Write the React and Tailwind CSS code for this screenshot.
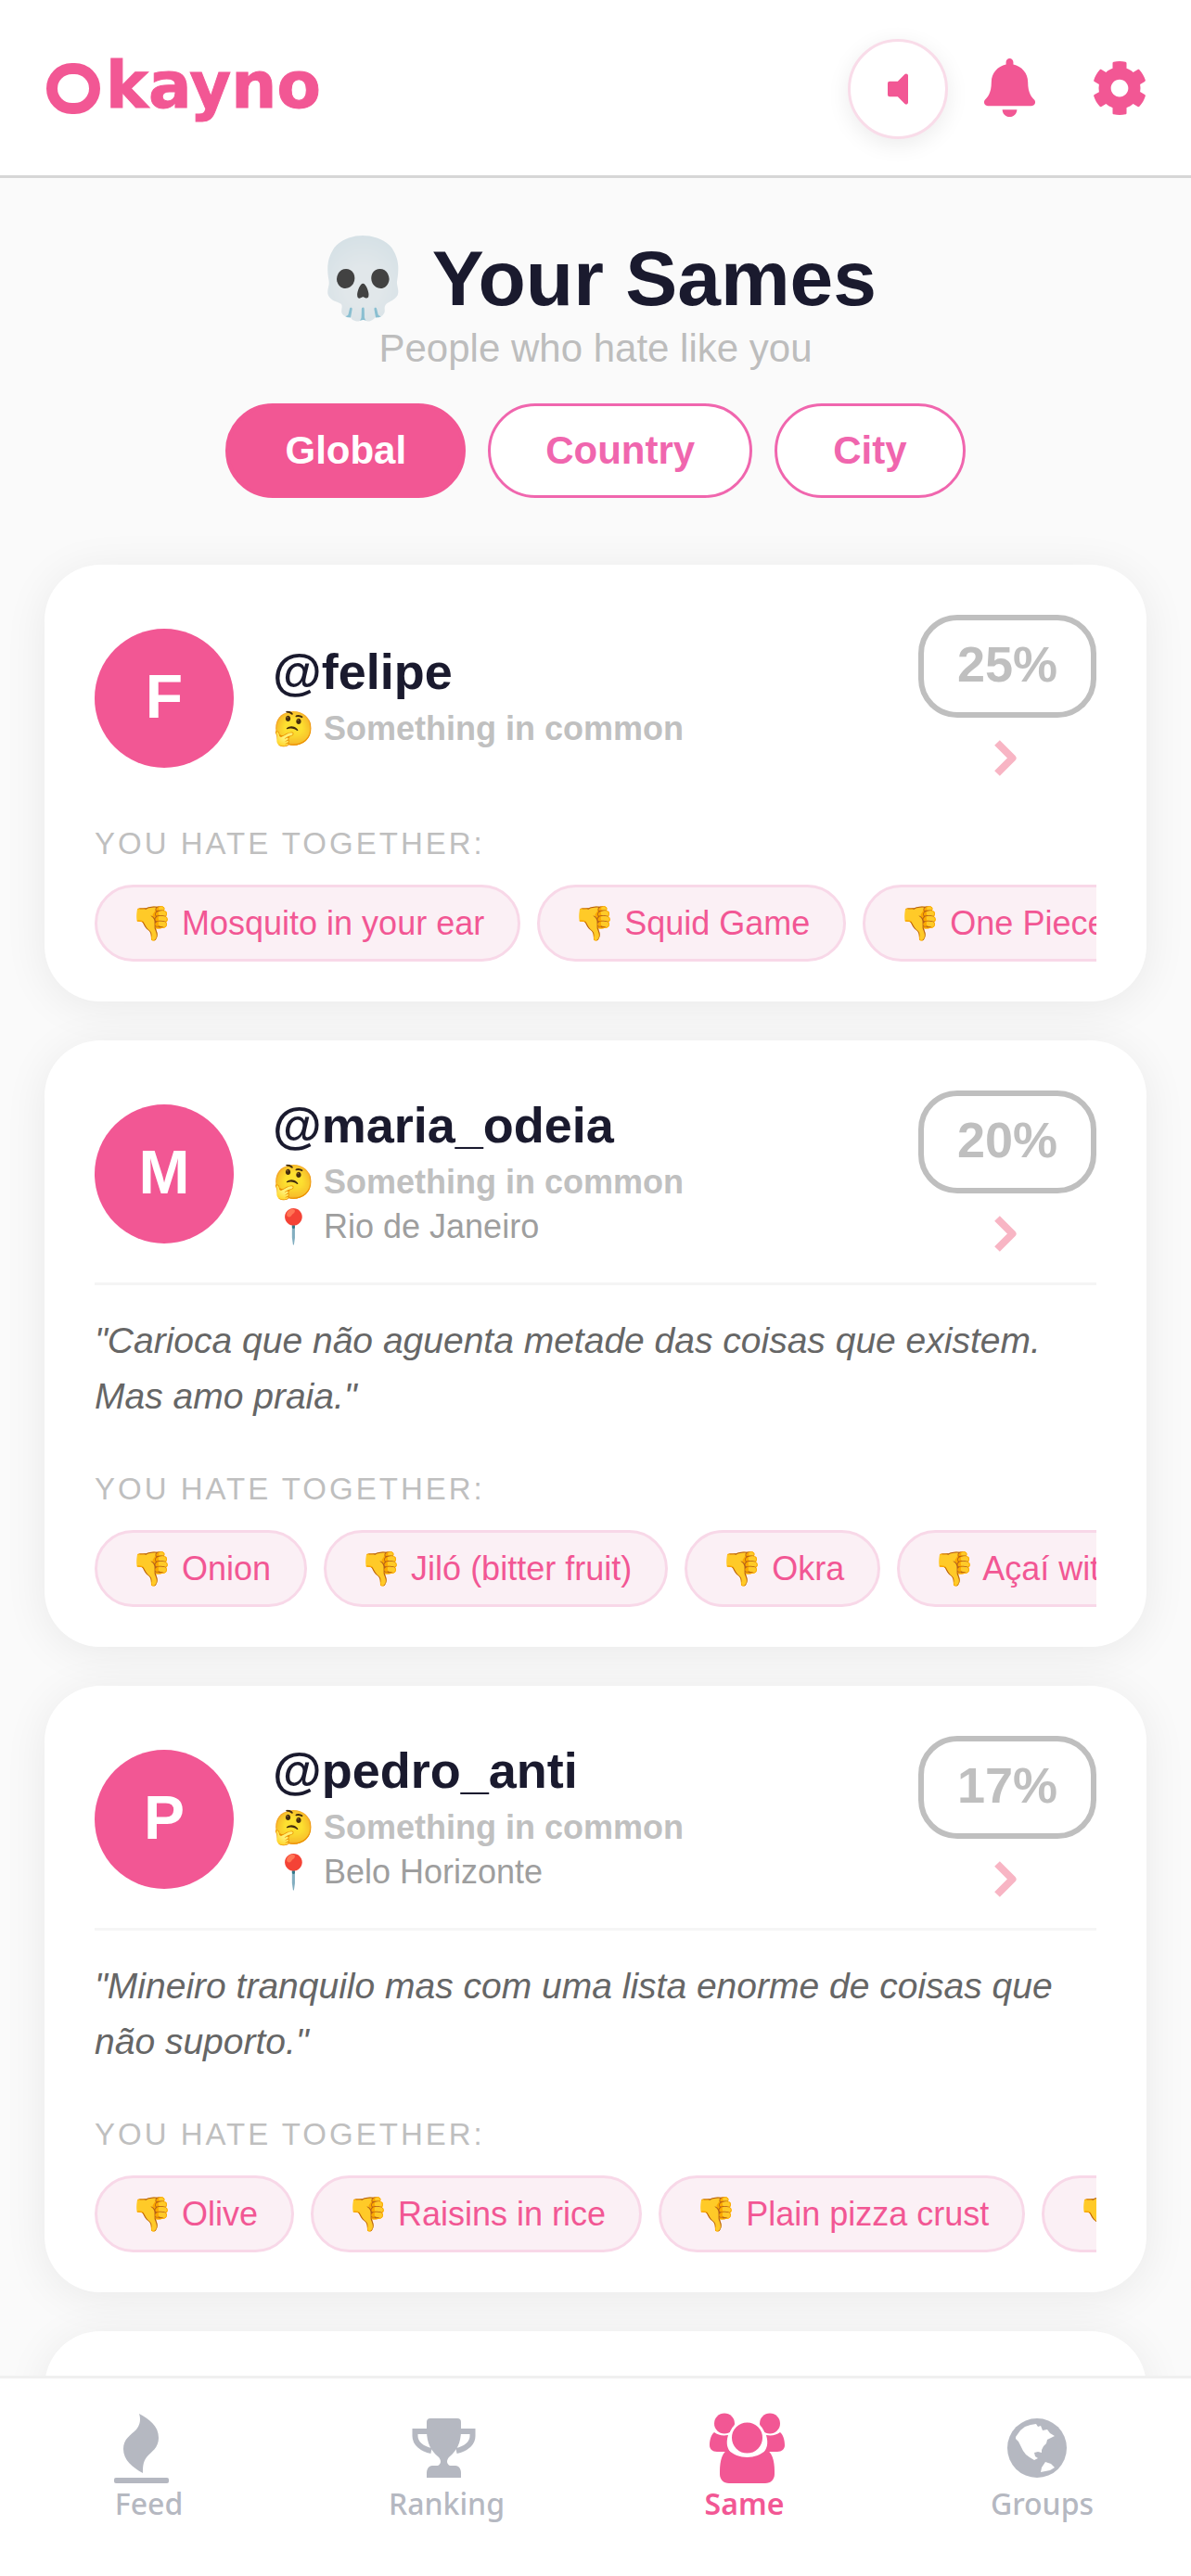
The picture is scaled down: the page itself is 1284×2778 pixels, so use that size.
import { FaBell, FaCog, FaVolumeOff } from "react-icons/fa"

const users = [
  {
    initial: "F",
    name: "@felipe",
    percent: "25%",
    chips: ["Mosquito in your ear", "Squid Game", "One Piece"],
  },
  {
    initial: "M",
    name: "@maria_odeia",
    percent: "20%",
    city: "Rio de Janeiro",
    bio: "\"Carioca que não aguenta metade das coisas que existem. Mas amo praia.\"",
    chips: ["Onion", "Jiló (bitter fruit)", "Okra", "Açaí with granola"],
  },
  {
    initial: "P",
    name: "@pedro_anti",
    percent: "17%",
    city: "Belo Horizonte",
    bio: "\"Mineiro tranquilo mas com uma lista enorme de coisas que não suporto.\"",
    chips: ["Olive", "Raisins in rice", "Plain pizza crust", "Cold coffee"],
  },
]

const FlameIcon = () => (
  <svg viewBox="0 0 75 75" className="w-[75px] h-[75px] overflow-visible" fill="#b5b8c1">
    <path d="M27 0C38 6 48 13 48 26C48 37 40 41 35 47C31 52 31 58 31 64C20 58 10 50 10 38C10 27 18 23 24 17C28 12 29 6 27 0Z" />
    <rect x="0" y="69" width="59" height="6" rx="2" />
  </svg>
)

const TrophyIcon = () => (
  <svg viewBox="0 0 75 75" className="w-[75px] h-[75px] overflow-visible" fill="#b5b8c1">
    <path d="M20 5H49a4 4 0 0 1 4 4V18C53 32 48 40 41 46C37 49.5 37 54 41 56H47C51 56 53 60 53 64V69H16V64C16 60 18 56 22 56H28C32 54 32 49.5 28 46C21 40 16 32 16 18V9a4 4 0 0 1 4-4Z" />
    <path d="M17 19H3.5V24C3.5 32 11 38 21 40" fill="none" stroke="#b5b8c1" strokeWidth="6" />
    <path d="M52 19H65.5V24C65.5 32 58 38 48 40" fill="none" stroke="#b5b8c1" strokeWidth="6" />
  </svg>
)

const PeopleIcon = () => (
  <svg viewBox="0 0 75 75" className="w-[75px] h-[75px] overflow-visible" fill="#f25794">
    <circle cx="16" cy="10.5" r="11" />
    <circle cx="65" cy="10.5" r="11" />
    <path d="M5 20C9 23 14 24 20 23C17 33 20 38 22 41H8C3 41 0 38 0 34C0 28 2 22 5 20Z" />
    <path d="M76 20C72 23 67 24 61 23C64 33 61 38 59 41H73C78 41 81 38 81 34C81 28 79 22 76 20Z" />
    <circle cx="40.5" cy="26" r="18" stroke="#fff" strokeWidth="3" />
    <path d="M20 39C25 44 33 47 40.5 47C48 47 56 44 61 39C67 41 70 50 70 62V65C70 71 66 75 60 75H21C15 75 11 71 11 65V62C11 50 14 41 20 39Z" />
  </svg>
)

const GlobeIcon = () => (
  <svg viewBox="0 0 75 75" className="w-[75px] h-[75px] overflow-visible">
    <circle cx="32" cy="37" r="32" fill="#b5b8c1" />
    <path
      d="M9 25L14 18L19 14L25 12L31 11L33 14L36 13L38 18L43 17L46 21L51 24L47 26L43 28L42 32L39 35L37 39L37 42L33 41L29 42L30 46L33 48L29 50L24 47L20 44L17 40L14 34L12 30L9 27Z"
      fill="#fff"
    />
    <path d="M36 63L37 58L41 52L47 54L51 58L46 61Z" fill="#fff" />
  </svg>
)

const navItems = [
  { label: "Feed", icon: <FlameIcon /> },
  { label: "Ranking", icon: <TrophyIcon /> },
  { label: "Same", icon: <PeopleIcon />, active: true },
  { label: "Groups", icon: <GlobeIcon /> },
]

const UserCard = ({ user }) => (
  <div className="bg-white rounded-[60px] px-[54px] pt-[54px] pb-[43px] mb-[42px] shadow-[0_6px_48px_rgba(0,0,0,0.07)]">
    <div className="flex items-center">
      <div className="w-[150px] h-[150px] pb-[3px] rounded-full bg-[#f25794] flex items-center justify-center text-white text-[66px] font-bold shrink-0">
        {user.initial}
      </div>
      <div className="ml-[42px] flex-1 pb-[4px]">
        <div className="text-[54px] leading-[62px] font-bold text-[#1a1a2e]">{user.name}</div>
        <div className="mt-[7px] text-[36px] leading-[48px] font-bold text-[#c0c0c0]">🤔 Something in common</div>
        {user.city && <div className="text-[36px] leading-[48px] text-[#9e9e9e]">📍 {user.city}</div>}
      </div>
      <div className="flex flex-col items-center shrink-0">
        <div className="border-[6px] border-[#bfbfbf] rounded-[42px] px-[36px] pt-[16px] pb-[20px] text-[54px] leading-[63px] font-bold text-[#bfbfbf]">
          {user.percent}
        </div>
        <div className="mt-[21px] mb-[3px] mr-[2px] h-[45px] flex items-center justify-center">
          <svg viewBox="0 0 25 39" className="w-[25px] h-[39px]">
            <path d="M3 3L19.5 19.5L3 36" fill="none" stroke="#f8b5c4" strokeWidth="8" strokeLinejoin="round" />
          </svg>
        </div>
      </div>
    </div>

    {user.bio && (
      <div className="mt-[27px] border-t-[3px] border-[#f5f5f5] pt-[30px]">
        <p className="text-[39px] leading-[60px] italic text-[#666666]">{user.bio}</p>
      </div>
    )}

    <div className={`${user.bio ? "mt-[49px]" : "mt-[46px]"} text-[33px] leading-[42px] tracking-[3px] text-[#bfbfbf]`}>
      YOU HATE TOGETHER:
    </div>
    <div className="mt-[23px] flex gap-[18px] overflow-hidden">
      {user.chips.map((chip) => (
        <div
          key={chip}
          className="shrink-0 whitespace-nowrap rounded-full border-[3px] border-[#f8d8e8] bg-[#fbf0f5] px-[36px] py-[18px] text-[36px] leading-[41px] text-[#f25794]"
        >
          👎 {chip}
        </div>
      ))}
    </div>
  </div>
)

const App = () => {
  return (
    <div className="h-screen flex flex-col bg-[#fafafa] font-['Liberation_Sans',sans-serif]">
      {/* Header */}
      <div className="h-[192px] shrink-0 bg-white border-b-[3px] border-[#d6d6d6] flex items-center pl-[50px] pr-[47px]">
        <div
          aria-label="Okayno"
          className="flex items-center font-['DejaVu_Sans',sans-serif] font-bold text-[69px] leading-none text-[#f25794] [-webkit-text-stroke:1px_#f25794]"
        >
          <div className="w-[58px] h-[55px] mt-px rounded-full border-[12px] border-[#f25794]" />
          <span className="ml-[6px] mb-[5px]">kayno</span>
        </div>
        <div className="ml-auto mt-[2px] w-[108px] h-[108px] rounded-full bg-white border-[3px] border-[#f9dce9] shadow-[0_6px_24px_rgba(0,0,0,0.08)] flex items-center justify-center text-[#f25794]">
          <FaVolumeOff size={44} />
        </div>
        <div className="ml-[35px] text-[#f25794]">
          <FaBell size={63} />
        </div>
        <div className="ml-[57px] text-[#f25794]">
          <FaCog size={60} />
        </div>
      </div>

      {/* Content */}
      <div className="flex-1 overflow-hidden px-[48px] pt-[58px]">
        <div className="text-center text-[84px] leading-[100px] font-bold text-[#1a1a2e]">💀 Your Sames</div>
        <div className="mt-[2px] text-center text-[42px] leading-[48px] text-[#bdbdbd]">People who hate like you</div>

        <div className="mt-[35px] mb-[72px] flex justify-center gap-[24px]">
          <div className="rounded-full border-[4px] border-[#f25794] bg-[#f25794] px-[60px] py-[23px] text-[42px] leading-[48px] font-bold text-white">
            Global
          </div>
          <div className="rounded-full border-[3px] border-[#f066ae] bg-white px-[59px] py-[24px] text-[42px] leading-[48px] font-bold text-[#f066ae]">
            Country
          </div>
          <div className="rounded-full border-[3px] border-[#f066ae] bg-white px-[60px] py-[24px] text-[42px] leading-[48px] font-bold text-[#f066ae]">
            City
          </div>
        </div>

        {users.map((user) => (
          <UserCard key={user.name} user={user} />
        ))}
        <div className="bg-white rounded-[60px] h-[300px] shadow-[0_6px_48px_rgba(0,0,0,0.07)]" />
      </div>

      {/* Bottom nav */}
      <div className="h-[216px] shrink-0 bg-white border-t-[3px] border-[#f0f0f0] grid grid-cols-4 pt-[38px] font-['Noto_Sans',sans-serif]">
        {navItems.map((item) => (
          <div key={item.label} className="flex flex-col items-center">
            {item.icon}
            <div
              className={`mt-px text-[32px] leading-[42px] ${
                item.active ? "font-semibold text-[#f25794]" : "font-medium text-[#b5b8c1]"
              }`}
            >
              {item.label}
            </div>
          </div>
        ))}
      </div>
    </div>
  )
}

export default App
